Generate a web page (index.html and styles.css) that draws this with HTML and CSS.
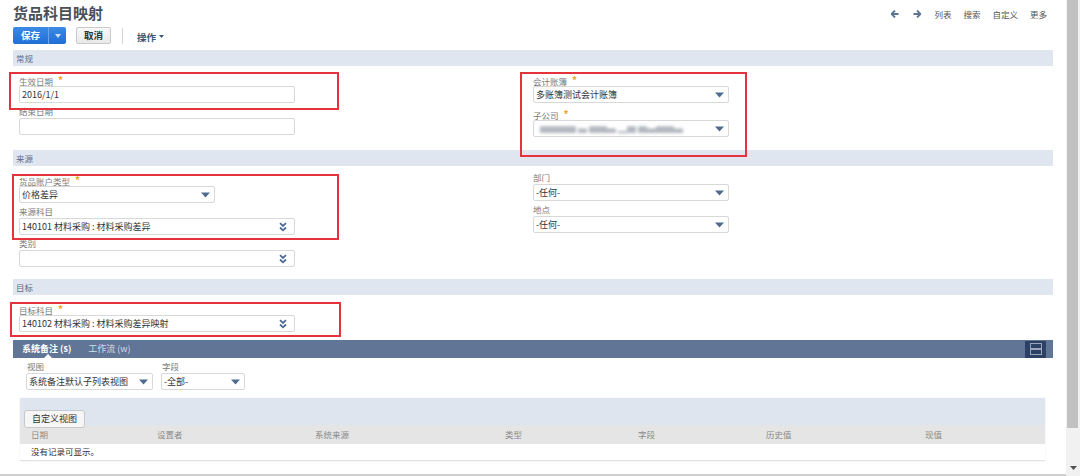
FILE: index.html
```html
<!DOCTYPE html>
<html lang="zh-CN">
<head>
<meta charset="utf-8">
<title>货品科目映射</title>
<link rel="stylesheet" href="styles.css">
</head>
<body>
<div class="window">
  <div class="page">
    <header class="top">
      <h1 class="title">货品科目映射</h1>
      <nav class="nav">
        <svg class="arr" width="8" height="8" viewBox="0 0 8 8"><path d="M4 0.5 L0.5 4 L4 7.5 M0.8 4 H7.5" fill="none" stroke="#5d7394" stroke-width="1.8"/></svg>
        <svg class="arr arr-r" width="8" height="8" viewBox="0 0 8 8"><path d="M4 0.5 L7.5 4 L4 7.5 M7.2 4 H0.5" fill="none" stroke="#5d7394" stroke-width="1.8"/></svg>
        <span class="nav-link">列表</span>
        <span class="nav-link">搜索</span>
        <span class="nav-link">自定义</span>
        <span class="nav-link">更多</span>
      </nav>
    </header>

    <div class="toolbar">
      <div class="btn-save"><span class="btn-save-main">保存</span><span class="btn-save-drop"><svg width="6" height="4" viewBox="0 0 6 4"><path d="M0 0 H6 L3 4 Z" fill="#cfe0f7"/></svg></span></div>
      <button class="btn-cancel">取消</button>
      <span class="tb-sep"></span>
      <span class="tb-action">操作 <svg width="5" height="3" viewBox="0 0 5 3"><path d="M0 0 H5 L2.5 3 Z" fill="#3d5575"/></svg></span>
    </div>

    <section class="sec">
      <div class="sec-head">常规</div>
      <div class="sec-body sec-body-a">
        <div class="col col-left">
          <div class="field">
            <div class="lbl">生效日期<span class="req">*</span></div>
            <div class="inp w-long">2016/1/1</div>
          </div>
          <div class="field">
            <div class="lbl">结束日期</div>
            <div class="inp w-long"></div>
          </div>
        </div>
        <div class="col col-right col-loose">
          <div class="field">
            <div class="lbl">会计账簿<span class="req">*</span></div>
            <div class="inp sel w-mid"><span>多账簿测试会计账簿</span><svg class="dd" width="9" height="6" viewBox="0 0 9 6"><path d="M0 0.5 H9 L4.5 5.5 Z" fill="#4f6b91"/></svg></div>
          </div>
          <div class="field">
            <div class="lbl">子公司<span class="req">*</span></div>
            <div class="inp sel w-mid"><span class="blur">▆▆▆▆ ▄ ▆▆▄ ▂▆ ▆▄▆▆▄</span><svg class="dd" width="9" height="6" viewBox="0 0 9 6"><path d="M0 0.5 H9 L4.5 5.5 Z" fill="#4f6b91"/></svg></div>
          </div>
        </div>
      </div>
    </section>

    <section class="sec">
      <div class="sec-head">来源</div>
      <div class="sec-body sec-body-b">
        <div class="col col-left">
          <div class="field">
            <div class="lbl">货品账户类型<span class="req">*</span></div>
            <div class="inp sel w-mid"><span>价格差异</span><svg class="dd" width="9" height="6" viewBox="0 0 9 6"><path d="M0 0.5 H9 L4.5 5.5 Z" fill="#4f6b91"/></svg></div>
          </div>
          <div class="field">
            <div class="lbl">来源科目</div>
            <div class="inp sel w-long"><span>140101 材料采购 : 材料采购差异</span><svg class="dbl" width="8" height="10" viewBox="0 0 8 10"><path d="M1 1.2 L4 4 L7 1.2 M1 5.5 L4 8.3 L7 5.5" fill="none" stroke="#4f6b91" stroke-width="1.8"/></svg></div>
          </div>
          <div class="field">
            <div class="lbl">类别</div>
            <div class="inp sel w-long"><span></span><svg class="dbl" width="8" height="10" viewBox="0 0 8 10"><path d="M1 1.2 L4 4 L7 1.2 M1 5.5 L4 8.3 L7 5.5" fill="none" stroke="#4f6b91" stroke-width="1.8"/></svg></div>
          </div>
        </div>
        <div class="col col-right col-up">
          <div class="field">
            <div class="lbl">部门</div>
            <div class="inp sel w-mid"><span>-任何-</span><svg class="dd" width="9" height="6" viewBox="0 0 9 6"><path d="M0 0.5 H9 L4.5 5.5 Z" fill="#4f6b91"/></svg></div>
          </div>
          <div class="field">
            <div class="lbl">地点</div>
            <div class="inp sel w-mid"><span>-任何-</span><svg class="dd" width="9" height="6" viewBox="0 0 9 6"><path d="M0 0.5 H9 L4.5 5.5 Z" fill="#4f6b91"/></svg></div>
          </div>
        </div>
      </div>
    </section>

    <section class="sec">
      <div class="sec-head">目标</div>
      <div class="sec-body sec-body-c">
        <div class="col col-left">
          <div class="field">
            <div class="lbl">目标科目<span class="req">*</span></div>
            <div class="inp sel w-long"><span>140102 材料采购 : 材料采购差异映射</span><svg class="dbl" width="8" height="10" viewBox="0 0 8 10"><path d="M1 1.2 L4 4 L7 1.2 M1 5.5 L4 8.3 L7 5.5" fill="none" stroke="#4f6b91" stroke-width="1.8"/></svg></div>
          </div>
        </div>
      </div>
    </section>

    <div class="tabbar">
      <div class="tabs">
        <span class="tab tab-active">系统备注 (s)</span>
        <span class="tab">工作流 (w)</span>
      </div>
      <span class="tab-icon"><svg width="12" height="12" viewBox="0 0 12 12"><rect x="0.5" y="0.5" width="11" height="5" fill="none" stroke="#9aa6b8"/><rect x="0.5" y="6.5" width="11" height="5" fill="none" stroke="#9aa6b8"/></svg></span>
    </div>

    <div class="filters">
      <div class="ffield">
        <div class="lbl">视图</div>
        <div class="inp sel w-view"><span>系统备注默认子列表视图</span><svg class="dd" width="9" height="6" viewBox="0 0 9 6"><path d="M0 0.5 H9 L4.5 5.5 Z" fill="#4f6b91"/></svg></div>
      </div>
      <div class="ffield">
        <div class="lbl">字段</div>
        <div class="inp sel w-fld"><span>-全部-</span><svg class="dd" width="9" height="6" viewBox="0 0 9 6"><path d="M0 0.5 H9 L4.5 5.5 Z" fill="#4f6b91"/></svg></div>
      </div>
    </div>

    <div class="notes">
      <div class="notes-bar"><button class="btn-view">自定义视图</button></div>
      <div class="row row-head">
        <span>日期</span><span>设置者</span><span>系统来源</span><span>类型</span><span>字段</span><span>历史值</span><span>现值</span>
      </div>
      <div class="row row-empty">没有记录可显示。</div>
    </div>

    <div class="anno anno-1"></div>
    <div class="anno anno-2"></div>
    <div class="anno anno-3"></div>
    <div class="anno anno-4"></div>
  </div>
  <div class="scrollbar">
    <div class="thumb"></div>
    <div class="track"></div>
    <div class="sb-arrow"><svg width="7" height="4" viewBox="0 0 7 4"><path d="M0 0 H7 L3.5 4 Z" fill="#505050"/></svg></div>
  </div>
</div>
</body>
</html>
```

FILE: styles.css
```css
* { box-sizing: border-box; }

body {
  margin: 0;
  background: #fff;
  font-family: "Noto Sans CJK SC", "Noto Sans", sans-serif;
  color: #333;
}

.window {
  display: flex;
  width: 1080px;
  height: 476px;
  overflow: hidden;
}

.page {
  position: relative;
  width: 1066px;
  height: 476px;
  border-bottom: 2px solid #cfcfcf;
  overflow: hidden;
}

/* header */
.top {
  display: flex;
  justify-content: space-between;
  align-items: center;
  height: 25px;
  padding: 0 19px 0 13px;
}

.title {
  margin: 0;
  font-size: 15px;
  font-weight: bold;
  line-height: 25px;
  color: #4a5058;
}

.nav {
  display: flex;
  align-items: center;
  gap: 12px;
  padding-top: 3px;
  font-size: 8.5px;
  color: #555;
}

.arr { display: block; }
.arr-r { margin-left: 2px; margin-right: 1px; }

/* toolbar */
.toolbar {
  display: flex;
  align-items: center;
  height: 17px;
  margin: 2px 0 6px 13px;
}

.btn-save {
  display: flex;
  height: 17px;
  width: 53px;
  border-radius: 2px;
  background: linear-gradient(#3b8ae6, #1f6fd6);
  overflow: hidden;
}

.btn-save-main {
  width: 36px;
  text-align: center;
  font-size: 9.5px;
  font-weight: bold;
  line-height: 17px;
  color: #fff;
  border-right: 1px solid #6fa4ea;
}

.btn-save-drop {
  flex: 1;
  display: flex;
  align-items: center;
  justify-content: center;
}

.btn-cancel {
  margin-left: 10px;
  width: 35px;
  height: 17px;
  padding: 0;
  border: 1px solid #c9c9c9;
  border-radius: 2px;
  background: linear-gradient(#f8f8f8, #e9e9e9);
  font-family: inherit;
  font-size: 9.5px;
  font-weight: bold;
  color: #333;
  line-height: 15px;
}

.tb-sep {
  width: 1px;
  height: 16px;
  margin-left: 11px;
  background: #d4d4d4;
}

.tb-action {
  display: flex;
  align-items: center;
  gap: 3px;
  margin-left: 14px;
  padding-top: 2px;
  font-size: 9.5px;
  font-weight: bold;
  color: #3d5575;
}

/* sections */
.sec { margin: 0 13px; }

.sec-head {
  height: 16px;
  padding-left: 3px;
  background: #e0e6ef;
  font-size: 8.5px;
  line-height: 16px;
  color: #5b6e89;
}

.sec-body {
  display: flex;
  padding: 7px 0 13px 6px;
}

.sec-body-b { padding-bottom: 12px; }
.sec-body-c { padding-bottom: 8px; }

.col-left { width: 514px; }

.col { display: flex; flex-direction: column; gap: 2px; }
.col-loose { gap: 4px; }
.col-up { margin-top: -2px; }

.lbl {
  height: 13px;
  font-size: 8.5px;
  line-height: 13px;
  color: #7a7a7a;
  white-space: nowrap;
}

.req {
  margin-left: 5px;
  font-size: 10px;
  font-weight: bold;
  color: #f0a21f;
  vertical-align: 1px;
}

.inp {
  height: 17px;
  padding-left: 2px;
  border: 1px solid #d8d8d8;
  border-radius: 2px;
  background: #fff;
  font-size: 9px;
  line-height: 15px;
  color: #333;
  white-space: nowrap;
}

.sel {
  display: flex;
  align-items: center;
  justify-content: space-between;
  padding-right: 7px;
}

.sel .dd { flex: none; margin-right: -3px; }
.sel .dbl { flex: none; margin-right: 0; }

.w-long { width: 276px; }
.w-mid { width: 196px; }
.w-view { width: 127px; }
.w-fld { width: 84px; }

.blur {
  padding-left: 4px;
  color: #b4b8c0;
  filter: blur(1.5px);
  font-size: 9px;
  letter-spacing: 0;
}

/* tab bar */
.tabbar {
  display: flex;
  justify-content: space-between;
  align-items: center;
  height: 18px;
  margin: 0 13px;
  background: #617696;
}

.tabs {
  display: flex;
  gap: 17px;
  padding-left: 9px;
}

.tab {
  position: relative;
  font-size: 9px;
  line-height: 18px;
  color: #d5dce7;
}

.tab-active {
  font-weight: bold;
  color: #fff;
}

.tab-active::after {
  content: "";
  position: absolute;
  left: 50%;
  bottom: 0;
  margin-left: -3px;
  border-left: 4px solid transparent;
  border-right: 4px solid transparent;
  border-bottom: 4px solid #fff;
}

.tab-icon {
  display: flex;
  align-items: center;
  justify-content: center;
  width: 21px;
  height: 17px;
  margin-right: 7px;
  background: #2d4065;
}

/* filters */
.filters {
  display: flex;
  gap: 8px;
  padding: 2px 0 0 26px;
}

.ffield .lbl { padding-left: 1px; }

/* notes list */
.notes {
  margin: 8px 21px 0 20px;
  border-bottom: 1px solid #e2e2e2;
  box-shadow: 0 0 1px #ddd;
}

.notes-bar {
  height: 27px;
  padding: 5px 0 0 4px;
  background: #dfe5ee;
}

.btn-view {
  height: 18px;
  width: 61px;
  padding: 0;
  border: 1px solid #c8c8c8;
  border-radius: 3px;
  background: #f6f6f6;
  font-family: inherit;
  font-size: 9px;
  color: #333;
}

.row {
  display: grid;
  grid-template-columns: 126px 158px 190px 133px 128px 159px 1fr;
  padding-left: 11px;
  font-size: 8.5px;
}

.row-head {
  height: 19px;
  line-height: 19px;
  background: #e5e5e5;
  color: #8a8a8a;
}

.row-empty {
  display: block;
  height: 16px;
  line-height: 15px;
  color: #333;
  font-size: 8.5px;
}

/* annotations */
.anno {
  position: absolute;
  border: 2px solid #e5323b;
  pointer-events: none;
}

.anno-1 { left: 9px; top: 72px; width: 330px; height: 38px; }
.anno-2 { left: 520px; top: 72px; width: 227px; height: 85px; }
.anno-3 { left: 12px; top: 174px; width: 327px; height: 66px; }
.anno-4 { left: 10px; top: 302px; width: 331px; height: 35px; }

/* scrollbar */
.scrollbar {
  display: flex;
  flex-direction: column;
  width: 14px;
  height: 476px;
  background: #f1f1f1;
}

.thumb {
  height: 428px;
  margin: 0 2px 0 1px;
  background: #c1c1c1;
}

.track { flex: 1; }

.sb-arrow {
  display: flex;
  justify-content: center;
  height: 10px;
}
```
